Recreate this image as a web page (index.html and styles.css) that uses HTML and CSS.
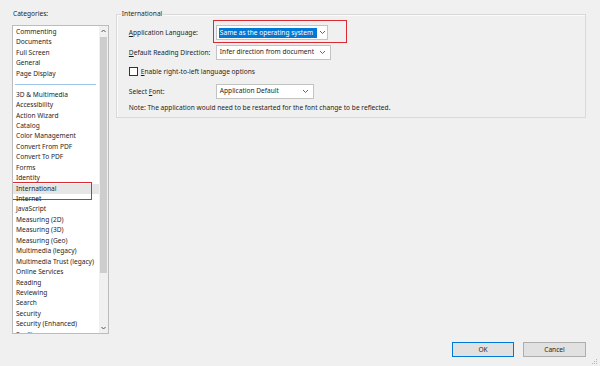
FILE: index.html
```html
<!DOCTYPE html>
<html lang="en">
<head>
  <meta charset="UTF-8">
  <title>Preferences - International</title>
  <link rel="stylesheet" href="styles.css">
</head>
<body>
  <div class="dialog">
    <div class="main">
      <div class="categories">
        <div class="cat-label">Categories:</div>
        <div class="listbox">
          <ul class="cat-list">
            <li>Commenting</li>
            <li>Documents</li>
            <li>Full Screen</li>
            <li>General</li>
            <li>Page Display</li>
            <li class="sep"></li>
            <li>3D &amp; Multimedia</li>
            <li>Accessibility</li>
            <li>Action Wizard</li>
            <li>Catalog</li>
            <li>Color Management</li>
            <li>Convert From PDF</li>
            <li>Convert To PDF</li>
            <li>Forms</li>
            <li>Identity</li>
            <li class="selected">International<span class="mark mark-cat"></span></li>
            <li>Internet</li>
            <li>JavaScript</li>
            <li>Measuring (2D)</li>
            <li>Measuring (3D)</li>
            <li>Measuring (Geo)</li>
            <li>Multimedia (legacy)</li>
            <li>Multimedia Trust (legacy)</li>
            <li>Online Services</li>
            <li>Reading</li>
            <li>Reviewing</li>
            <li>Search</li>
            <li>Security</li>
            <li>Security (Enhanced)</li>
            <li>Spelling</li>
          </ul>
          <div class="scrollbar">
            <svg class="arrow" width="9" height="10" viewBox="0 0 9 10"><path d="M2.5 6 L4.5 4 L6.5 6" fill="none" stroke="#555" stroke-width="1"/></svg>
            <div class="thumb"></div>
            <div class="track"></div>
            <svg class="arrow" width="9" height="10" viewBox="0 0 9 10"><path d="M2.5 4 L4.5 6 L6.5 4" fill="none" stroke="#555" stroke-width="1"/></svg>
          </div>
        </div>
      </div>

      <fieldset class="group">
        <legend>International</legend>
        <div class="rows">
          <div class="row">
            <span class="label"><u>A</u>pplication Language:</span>
            <div class="combo combo-lang">
              <span class="value selected-text">Same as the operating system</span>
              <svg class="chev" width="7" height="5" viewBox="0 0 7 5"><path d="M1 1 L3.5 3.5 L6 1" fill="none" stroke="#666" stroke-width="1"/></svg>
              <span class="mark mark-lang"></span>
            </div>
          </div>
          <div class="row">
            <span class="label"><u>D</u>efault Reading Direction:</span>
            <div class="combo combo-dir">
              <span class="value">Infer direction from document</span>
              <svg class="chev" width="7" height="5" viewBox="0 0 7 5"><path d="M1 1 L3.5 3.5 L6 1" fill="none" stroke="#666" stroke-width="1"/></svg>
            </div>
          </div>
          <div class="row">
            <span class="checkbox"></span>
            <span class="check-label"><u>E</u>nable right-to-left language options</span>
          </div>
          <div class="row">
            <span class="label">Select <u>F</u>ont:</span>
            <div class="combo combo-font">
              <span class="value">Application Default</span>
              <svg class="chev" width="7" height="5" viewBox="0 0 7 5"><path d="M1 1 L3.5 3.5 L6 1" fill="none" stroke="#666" stroke-width="1"/></svg>
            </div>
          </div>
          <div class="note">Note: The application would need to be restarted for the font change to be reflected.</div>
        </div>
      </fieldset>
    </div>

    <div class="footer">
      <button class="btn btn-primary">OK</button>
      <button class="btn">Cancel</button>
    </div>
    <svg class="grip" width="5" height="5" viewBox="0 0 5 5">
      <rect x="4" y="0" width="1" height="1" fill="#b5b5b5"/>
      <rect x="2" y="2" width="1" height="1" fill="#b5b5b5"/>
      <rect x="4" y="2" width="1" height="1" fill="#b5b5b5"/>
      <rect x="0" y="4" width="1" height="1" fill="#b5b5b5"/>
      <rect x="2" y="4" width="1" height="1" fill="#b5b5b5"/>
      <rect x="4" y="4" width="1" height="1" fill="#b5b5b5"/>
    </svg>
  </div>
</body>
</html>
```

FILE: styles.css
```css
/* Preferences dialog */
body {
  margin: 0;
  background: #f0f0f0;
  font-family: "Noto Sans", "Open Sans", sans-serif;
  font-size: 6.6px;
  color: #1e1e1e;
}
.dialog {
  position: relative;
  width: 600px;
  height: 366px;
  box-sizing: border-box;
  padding: 9px 14px 0 12px;
}
.main {
  display: flex;
  align-items: flex-start;
  gap: 7px;
}

/* categories list */
.categories {
  width: 97px;
}
.cat-label {
  height: 10px;
  line-height: 10px;
  padding-left: 1px;
  margin-bottom: 6px;
}
.listbox {
  display: flex;
  height: 309px;
  box-sizing: border-box;
  border: 1px solid #bcbcbc;
  background: #fff;
  overflow: hidden;
}
.cat-list {
  flex: 1;
  list-style: none;
  margin: 0;
  padding: 1px 0 0 0;
}
.cat-list li {
  position: relative;
  height: 10.45px;
  line-height: 10.45px;
  padding-left: 3px;
  white-space: nowrap;
}
.cat-list .sep {
  display: flex;
  align-items: center;
  padding: 0 3px 0 2px;
}
.cat-list .sep::before {
  content: "";
  flex: 1;
  height: 1px;
  background: #9fc7ea;
}
.cat-list .selected {
  background: #e6e6e6;
}
.scrollbar {
  width: 9px;
  display: flex;
  flex-direction: column;
  background: #f0f0f0;
}
.arrow {
  display: block;
  flex: none;
}
.thumb {
  height: 236px;
  margin: 1px 1px 0 1px;
  background: #cdcdcd;
}
.track {
  flex: 1;
}

/* red highlight boxes */
.mark {
  position: absolute;
  border: 1px solid #dc2a33;
  pointer-events: none;
}
.mark-cat {
  left: -1px;
  top: -2px;
  width: 78px;
  height: 16px;
}
.mark-lang {
  left: -4px;
  top: -6px;
  width: 132px;
  height: 21px;
}

/* group box */
.group {
  width: 471px;
  box-sizing: border-box;
  margin: 0;
  padding: 0 0 4px 4px;
  border: 1px solid #d9d9d9;
  box-shadow: inset 1px 1px 0 #fafafa;
  min-width: 0;
}
.group legend {
  padding: 0 1px;
  line-height: 10px;
}
.rows {
  display: flex;
  flex-direction: column;
  gap: 4.5px;
  padding: 6px 0 0 8px;
}
.row {
  display: flex;
  align-items: center;
  height: 15px;
}
.label {
  width: 87px;
  flex: none;
}
.combo {
  position: relative;
  display: flex;
  align-items: center;
  height: 15px;
  box-sizing: border-box;
  border: 1px solid #c3c3c3;
  background: #fff;
  padding: 0 4px 0 2px;
}
.combo .value {
  flex: 1;
  white-space: nowrap;
  line-height: 10px;
  padding-left: 1px;
}
.combo .selected-text {
  flex: none;
  width: 97px;
  background: #0078d7;
  color: #fff;
  margin-right: auto;
}
.combo .chev {
  flex: none;
  margin-left: 2px;
}
.combo-lang { width: 112px; }
.combo-dir { width: 115px; }
.combo-font { width: 98px; }
.checkbox {
  width: 9px;
  height: 9px;
  box-sizing: border-box;
  border: 1px solid #333;
  background: #fff;
  margin-right: 3px;
}
.note {
  line-height: 10px;
}

/* footer buttons */
.footer {
  display: flex;
  justify-content: flex-end;
  gap: 9px;
  margin-top: 8px;
}
.btn {
  width: 63px;
  height: 15px;
  padding: 0;
  font-family: inherit;
  font-size: 6.6px;
  color: #1e1e1e;
  background: #e1e1e1;
  border: 1px solid #adadad;
}
.btn-primary {
  width: 62px;
  border-color: #0078d7;
}
.grip {
  position: absolute;
  right: 3px;
  bottom: 2px;
}
```
